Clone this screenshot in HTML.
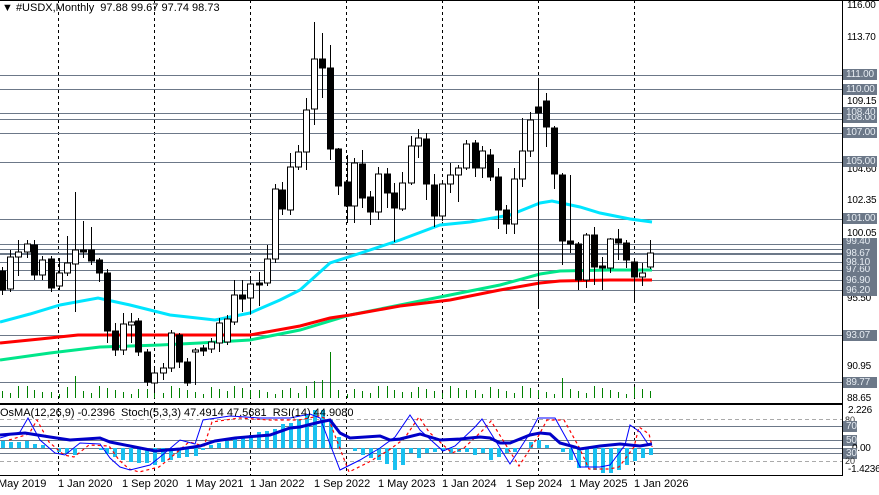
<!DOCTYPE html><html><head><meta charset="utf-8"><style>
body{margin:0;width:879px;height:495px;overflow:hidden;background:#fff;font-family:"Liberation Sans",sans-serif;font-size:11px}
svg{position:absolute;left:0;top:0}
.t{position:absolute;white-space:nowrap;color:#000;line-height:11px}
.a{font-size:10px;letter-spacing:-0.2px}
.b{position:absolute;left:843px;width:34px;height:11px;background:#6c7888;color:#e6ecf2;line-height:11px;padding-left:3px;box-sizing:border-box;font-size:10px;letter-spacing:-0.2px;white-space:nowrap}
</style></head><body>
<svg id="s" width="879" height="495" xmlns="http://www.w3.org/2000/svg"></svg>
<div class="t" style="left:2px;top:3px">&#9660; #USDX,Monthly&nbsp; 97.88 99.67 97.74 98.73</div>
<div class="t a" style="left:847px;top:0px">116.00</div>
<div class="t a" style="left:847px;top:32px">113.70</div>
<div class="t a" style="left:847px;top:96px">109.15</div>
<div class="t a" style="left:847px;top:164px">104.60</div>
<div class="t a" style="left:847px;top:195px">102.35</div>
<div class="t a" style="left:847px;top:228px">100.05</div>
<div class="t a" style="left:847px;top:293px">95.50</div>
<div class="t a" style="left:847px;top:361px">90.95</div>
<div class="t a" style="left:847px;top:393px">88.65</div>
<div class="b" style="top:69px">111.00</div>
<div class="b" style="top:84px">110.00</div>
<div class="b" style="top:107px">108.40</div>
<div class="b" style="top:115px;height:8px;overflow:hidden;line-height:6px">108.00</div>
<div class="b" style="top:127px">107.00</div>
<div class="b" style="top:156px">105.00</div>
<div class="b" style="top:213px">101.00</div>
<div class="b" style="top:238px;height:10px;line-height:8px;overflow:hidden">99.40</div>
<div class="b" style="top:248px">98.67</div>
<div class="b" style="top:257px">98.10</div>
<div class="b" style="top:266px;height:9px;line-height:7px;overflow:hidden">97.60</div>
<div class="b" style="top:275px">96.90</div>
<div class="b" style="top:285px">96.20</div>
<div class="b" style="top:330px">93.07</div>
<div class="b" style="top:377px">89.77</div>
<div class="t a" style="left:848px;top:405px">2.226</div>
<div class="t" style="left:845px;top:415px;font-size:9px;color:#333">80</div>
<div class="b" style="top:421px;width:14px;left:843px">70</div>
<div class="b" style="top:435px;width:14px">50</div>
<div class="t a" style="left:852px;top:443px">0.00</div>
<div class="b" style="top:448px;width:14px">30</div>
<div class="t" style="left:845px;top:456px;font-size:9px;color:#333">20</div>
<div class="t a" style="left:848px;top:464px">-1.4236</div>
<div class="t" style="left:0px;top:408px">OsMA(12,26,9) -0.2396 &nbsp;Stoch(5,3,3) 47.4914 47.5681 &nbsp;RSI(14) 44.9080</div>
<div class="t" style="left:-2px;top:479px">May 2019</div>
<div class="t" style="left:58px;top:479px">1 Jan 2020</div>
<div class="t" style="left:122px;top:479px">1 Sep 2020</div>
<div class="t" style="left:186px;top:479px">1 May 2021</div>
<div class="t" style="left:250px;top:479px">1 Jan 2022</div>
<div class="t" style="left:314px;top:479px">1 Sep 2022</div>
<div class="t" style="left:378px;top:479px">1 May 2023</div>
<div class="t" style="left:442px;top:479px">1 Jan 2024</div>
<div class="t" style="left:506px;top:479px">1 Sep 2024</div>
<div class="t" style="left:570px;top:479px">1 May 2025</div>
<div class="t" style="left:634px;top:479px">1 Jan 2026</div>
<script>
var s=document.getElementById('s'),h='';
function L(x1,y1,x2,y2,c,w,d){h+='<line x1="'+x1+'" y1="'+y1+'" x2="'+x2+'" y2="'+y2+'" stroke="'+c+'" stroke-width="'+(w||1)+'"'+(d?' stroke-dasharray="'+d+'"':'')+'/>';}
function P(pts,c,w,d){h+='<polyline fill="none" points="'+pts.map(function(p){return p.join(',')}).join(' ')+'" stroke="'+c+'" stroke-width="'+w+'"'+(d?' stroke-dasharray="'+d+'"':'')+'/>';}
L(0,0.5,879,0.5,'#000',1);L(842.5,0,842.5,476,'#000',1);L(0,403.5,842,403.5,'#000',1);L(0,404.5,842,404.5,'#000',1);L(0,475.5,842,475.5,'#000',1);
[58,154,250,346,442,538,634].forEach(function(x){L(x+.5,0,x+.5,476,'#000',1,'3,3');});
[[75,1],[89,1],[113,1],[119,1],[133,1],[162,1],[219,1],[244,1],[249,1],[253.5,2],[262,1],[270,1],[280,1],[290,1],[335,1],[382,1]].forEach(function(a){L(0,a[0]+.5,842,a[0]+.5,'#6c7888',a[1]);});
L(0,419.5,842,419.5,'#aaa',1,'4,3');L(0,426.5,842,426.5,'#6c7888');L(0,440.5,842,440.5,'#6c7888');L(0,448.5,842,448.5,'#6c7888');L(0,453.5,842,453.5,'#6c7888');L(0,461.5,842,461.5,'#aaa',1,'4,3');
var C=[[2,271,290,267,295,1],[10,257,289,250,292,0],[18,252,257,240,276,0],[27,244,252,240,258,0],[34,245,275,240,280,1],[42,260,275,256,280,0],[51,259,288,256,292,1],[59,273,286,258,290,0],[67,263,273,236,276,0],[75,250,264,192,312,0],[83,250,252,221,258,1],[91,250,261,227,265,1],[99,260,273,258,282,1],[107,273,331,269,343,1],[115,331,350,323,356,1],[123,324,350,313,355,0],[131,322,325,313,343,0],[138,321,352,318,356,1],[147,352,382,349,386,1],[154,373,383,366,390,0],[163,368,373,363,380,0],[171,333,368,330,372,0],[179,335,362,333,368,1],[187,362,383,358,386,1],[195,350,352,348,385,0],[203,348,351,345,356,1],[211,342,349,338,353,0],[219,323,343,318,352,0],[227,319,342,315,345,0],[234,295,322,280,325,0],[242,295,299,280,312,1],[250,284,298,276,314,0],[259,283,285,272,306,1],[267,259,283,245,286,0],[275,189,259,184,263,0],[282,190,209,182,215,1],[290,167,210,153,215,0],[298,152,167,145,170,0],[306,110,152,98,170,0],[314,59,109,22,125,0],[322,59,68,33,98,1],[330,68,149,45,160,1],[338,149,186,148,195,1],[347,182,206,155,223,1],[354,163,206,158,223,0],[362,164,198,150,208,1],[370,197,212,191,225,1],[378,174,212,167,220,0],[387,174,193,168,208,1],[394,193,208,183,242,1],[402,183,209,172,211,0],[411,146,183,136,185,0],[418,138,146,129,158,0],[426,139,184,133,200,1],[434,185,216,174,227,1],[442,184,216,180,221,0],[450,175,184,163,193,0],[458,168,175,165,202,0],[466,144,168,140,170,0],[475,143,168,140,177,1],[482,151,168,146,178,0],[490,155,177,149,181,1],[498,177,210,168,229,1],[506,210,224,205,234,1],[514,179,224,168,234,0],[522,151,179,118,187,0],[530,120,151,112,157,0],[538,107,113,80,307,1],[546,101,127,93,147,1],[554,128,174,126,189,1],[562,175,241,173,265,1],[570,241,244,175,253,1],[578,244,280,242,290,1],[586,235,280,233,288,0],[594,235,267,227,285,1],[602,266,268,257,290,1],[610,239,268,238,273,0],[618,239,243,229,260,1],[626,243,260,240,268,1],[634,262,277,260,302,1],[642,273,277,263,286,0],[650,253,267,240,269,0]];
var tall={75:376,314:381,322:380,330:352,562:378,282:390,290:388,338:390};
C.forEach(function(c){var v=tall[c[0]]||(386+(c[0]*7%9));L(c[0]+.5,398,c[0]+.5,v,'#008000',1);});
P([[0,322],[30,314],[60,305],[98,298],[130,305],[170,315],[215,320],[250,313],[280,300],[300,290],[330,263],[370,250],[400,240],[440,225],[470,222],[510,215],[540,203],[552,201],[580,207],[600,213],[630,219],[652,222]],'#00e5ff',3);
P([[0,360],[50,353],[100,347],[160,345],[200,343],[250,340],[300,330],[350,315],[400,305],[450,295],[500,285],[540,274],[560,271],[610,270],[652,270]],'#00e68a',3);
P([[0,343],[40,339],[78,335],[160,335],[250,335],[300,326],[330,318],[350,315],[400,306],[450,300],[500,290],[540,283],[560,281],[610,280],[652,280]],'#ff0000',3);
C.forEach(function(c){var x=c[0];L(x+.5,c[3],x+.5,c[4],'#000',1);h+='<rect x="'+(x-2.5)+'" y="'+c[1]+'" width="6" height="'+Math.max(1,c[2]-c[1])+'" fill="'+(c[5]?'#000':'#fff')+'" stroke="#000" stroke-width="1"/>';});
var H=[[2,441],[10,442],[18,442],[26,441],[34,444],[42,445],[58,452],[66,453],[74,455],[100,450],[106,454],[114,457],[122,460],[130,462],[138,463],[146,463],[154,465],[162,462],[170,460],[178,458],[186,457],[195,456],[202,450],[210,445],[218,443],[226,441],[234,438],[242,437],[250,435],[258,432],[266,431],[274,429],[282,424],[290,423],[298,419],[306,415],[314,410],[322,410],[330,420],[338,437],[346,448],[354,451],[362,455],[370,458],[378,460],[386,464],[394,470],[402,465],[410,453],[418,458],[426,453],[434,452],[442,451],[450,453],[458,452],[466,452],[474,455],[482,453],[490,460],[498,457],[506,453],[514,452],[530,442],[538,440],[546,445],[562,452],[570,460],[578,468],[586,467],[594,470],[602,473],[610,473],[618,470],[626,465],[634,461],[642,458],[650,455]];
H.forEach(function(b){var y=Math.min(b[1],448),hh=Math.abs(b[1]-448);h+='<rect x="'+(b[0]-1)+'" y="'+y+'" width="4" height="'+hh+'" fill="#19c0f0"/>';});
var ST=[[0,438],[20,432],[28,418],[40,440],[55,453],[65,455],[80,443],[100,444],[110,458],[120,467],[130,470],[150,465],[160,457],[180,440],[195,444],[203,420],[230,416],[260,418],[290,418],[310,414],[320,418],[340,470],[360,460],[380,448],[395,437],[410,415],[420,430],[443,451],[455,446],[475,427],[482,419],[510,464],[530,433],[538,418],[555,418],[570,445],[580,467],[600,467],[610,465],[625,445],[630,425],[640,432],[648,444],[652,445]];
P(ST.map(function(p){return [Math.min(p[0]+9,652),p[1]+2];}),'#ff0000',1.2,'3,3');
P(ST,'#0000ff',1);
P([[0,435],[25,433],[50,437],[70,440],[100,438],[110,442],[130,446],[155,451],[180,449],[200,446],[215,441],[235,438],[270,435],[290,428],[300,427],[320,422],[330,420],[340,433],[350,438],[380,436],[390,440],[400,439],[420,434],[440,440],[460,439],[480,437],[490,438],[500,443],[510,443],[530,435],[540,433],[550,434],[560,443],[575,447],[580,449],[600,446],[620,444],[640,446],[652,444]],'#0000c8',3);
s.innerHTML=h;
</script>
</body></html>
